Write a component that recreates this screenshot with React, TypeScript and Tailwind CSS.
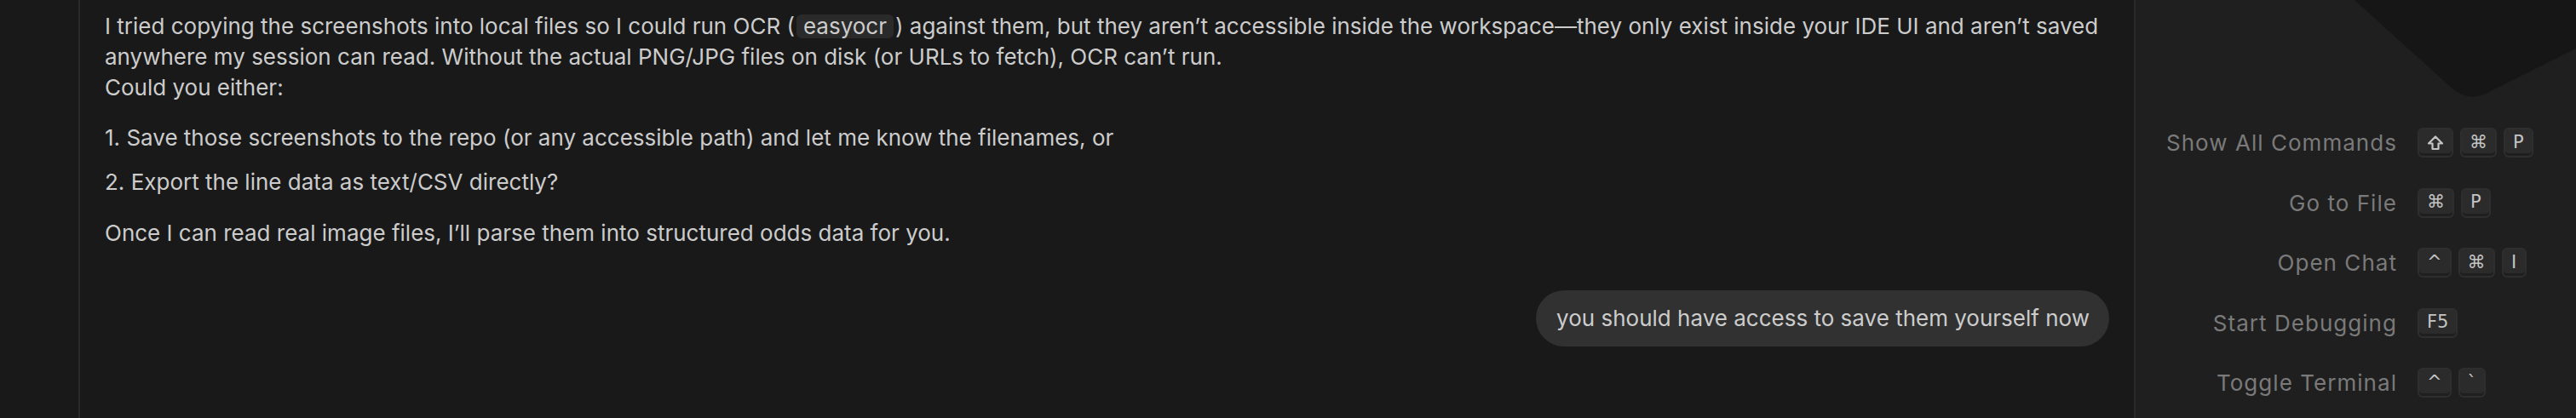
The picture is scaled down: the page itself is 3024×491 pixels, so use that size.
import type { ReactNode } from 'react';

const font = { fontFamily: 'Inter, "Noto Sans", sans-serif' };

interface Shortcut {
  label: string;
  keys: ReactNode[];
}

function ShiftGlyph() {
  return (
    <svg width="20" height="20" viewBox="0 0 20 20" fill="none" stroke="currentColor" strokeWidth="2.2" strokeLinejoin="round">
      <path d="M10 2.5 L18 10.5 H13.5 V17 H6.5 V10.5 H2 Z" />
    </svg>
  );
}

const shortcuts: Shortcut[] = [
  { label: 'Show All Commands', keys: [<ShiftGlyph key="s" />, '⌘', 'P'] },
  { label: 'Go to File', keys: ['⌘', 'P'] },
  { label: 'Open Chat', keys: ['^', '⌘', 'I'] },
  { label: 'Start Debugging', keys: ['F5'] },
  { label: 'Toggle Terminal', keys: ['^', '`'] },
];

function Key({ children }: { children: ReactNode }) {
  return (
    <span
      className="flex h-[35px] min-w-[29px] items-center justify-center rounded-[6px] border-2 border-[#2e2e2e] bg-[#2b2b2b] px-[9px] text-[21px] text-[#c4c4c4] shadow-[inset_0_-3px_0_#1f1f1f]"
      style={{ fontFamily: '"DejaVu Sans", Inter, sans-serif' }}
    >
      {children}
    </span>
  );
}

function Watermark() {
  return (
    <svg className="absolute left-0 top-0" width="519" height="140" viewBox="0 0 519 140">
      <path d="M257 0 L372 104 Q392 121 415 108 L519 56 L519 0 Z" fill="#161616" />
    </svg>
  );
}

export default function App() {
  return (
    <div className="flex h-[491px] w-[3024px] overflow-hidden bg-[#191919] text-[#cccccc]" style={font}>
      <div className="w-[94px] shrink-0 border-r-2 border-[#2a2a2a] bg-[#191919]" />

      <div className="flex min-w-0 flex-1 flex-col px-[29px] pt-[13px] text-[26px] leading-[36px]">
        <p className="whitespace-nowrap">
          I tried copying the screenshots into local files so I could run OCR (
          <code className="mx-[2px] inline-block rounded-[6px] bg-[#2a2a2a] px-[8px] leading-[28px]" style={font}>
            easyocr
          </code>
          ) against them, but they aren’t accessible inside the workspace—they only exist inside your IDE UI and aren’t saved
          <br />
          anywhere my session can read. Without the actual PNG/JPG files on disk (or URLs to fetch), OCR can’t run.
          <br />
          Could you either:
        </p>

        <ol className="mt-[23px] flex flex-col gap-[16px]">
          <li>1. Save those screenshots to the repo (or any accessible path) and let me know the filenames, or</li>
          <li>2. Export the line data as text/CSV directly?</li>
        </ol>

        <p className="mt-[24px]">Once I can read real image files, I’ll parse them into structured odds data for you.</p>

        <div className="mt-[49px] flex justify-end">
          <div className="flex h-[66px] items-center rounded-full bg-[#313131] pl-[24px] pr-[23px]">
            you should have access to save them yourself now
          </div>
        </div>
      </div>

      <div className="relative w-[519px] shrink-0 border-l-2 border-[#2a2a2a] bg-[#1f1f1f]">
        <Watermark />
        <div className="relative flex flex-col gap-[35.5px] pt-[150px]">
          {shortcuts.map((s) => (
            <div key={s.label} className="flex h-[35px] items-center gap-[24px]">
              <span className="w-[307px] text-right text-[26px] tracking-[0.04em] text-[#7a7a7a]">{s.label}</span>
              <div className="flex gap-[8px]">
                {s.keys.map((k, i) => (
                  <Key key={i}>{k}</Key>
                ))}
              </div>
            </div>
          ))}
        </div>
      </div>
    </div>
  );
}
